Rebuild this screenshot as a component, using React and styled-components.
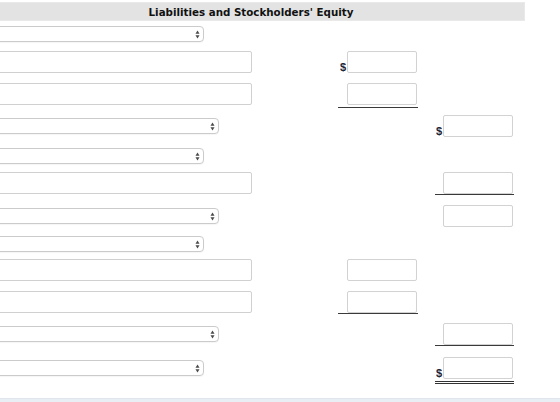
import React from 'react'
import styled, { createGlobalStyle } from 'styled-components'

const GlobalStyle = createGlobalStyle`
  body {
    margin: 0;
    background: #fff;
    overflow: hidden;
    font-family: "DejaVu Sans", Verdana, sans-serif;
  }
`

const Sheet = styled.div`
  margin-left: -23px;
  width: 583px;
  height: 402px;
  display: flex;
  flex-direction: column;
`

const Heading = styled.div`
  margin-top: 2px;
  width: 548px;
  height: 19px;
  box-sizing: border-box;
  background: #e3e3e3;
  border: 1px solid #e9e9e9;
  display: flex;
  align-items: center;
  justify-content: center;
  font-size: 10.3px;
  font-weight: bold;
  color: #111;
`

// label | subtotal column | spacer | total column
const Row = styled.div`
  display: grid;
  grid-template-columns: 361px 80px 17px 79px;
  grid-template-rows: 22px;
  align-items: start;
  margin-top: ${p => p.$top}px;
`

const SelectBox = styled.div`
  grid-column: 1;
  align-self: center;
  width: ${p => (p.$wide ? 242 : 227)}px;
  height: 16px;
  box-sizing: border-box;
  border: 1px solid #cbcbcb;
  border-radius: 4px;
  background: #fff;
  box-shadow: 0 1px 1px rgba(0, 0, 0, 0.04);
  display: flex;
  align-items: center;
  justify-content: flex-end;
  padding-right: 3px;
`

const TextBox = styled.div`
  grid-column: 1;
  width: 275px;
  height: 22px;
  box-sizing: border-box;
  border: 1px solid #d0d0d0;
  border-radius: 2px;
  background: #fff;
`

const Amount = styled.div`
  grid-column: ${p => (p.$total ? 4 : 2)};
  display: flex;
  align-items: flex-end;
  justify-content: flex-end;
  padding-right: 1px;
  padding-bottom: ${p => p.$pad || 0}px;
  border-bottom: ${p =>
    p.$line === 'double' ? '3px double #333' : p.$line ? '1px solid #3a3a3a' : 'none'};
`

const Field = styled.div`
  width: 70px;
  height: 22px;
  box-sizing: border-box;
  border: 1px solid #d2d2d2;
  border-radius: 2px;
  background: #fff;
`

const Dollar = styled.span`
  font-family: "Liberation Sans", Arial, sans-serif;
  font-size: 11px;
  font-weight: bold;
  line-height: 11px;
  color: #1f2636;
  margin-right: 1px;
`

const Footer = styled.div`
  margin-top: auto;
  height: 3px;
  background: #e9eef5;
  border-top: 1px solid #e0e6ee;
`

function Arrows() {
  return (
    <svg width="5" height="9" viewBox="0 0 5 9">
      <polygon points="0.5,3.8 2.5,0.6 4.5,3.8" fill="#4a4a4a" />
      <polygon points="0.5,5.2 2.5,8.4 4.5,5.2" fill="#4a4a4a" />
    </svg>
  )
}

const Select = ({ wide }) => (
  <SelectBox $wide={wide}>
    <Arrows />
  </SelectBox>
)

const Money = ({ total, dollar, line, pad }) => (
  <Amount $total={total} $line={line} $pad={pad}>
    {dollar && <Dollar>$</Dollar>}
    <Field />
  </Amount>
)

export default function App() {
  return (
    <>
      <GlobalStyle />
      <Sheet>
        <Heading>Liabilities and Stockholders' Equity</Heading>

        <Row $top={2}>
          <Select />
        </Row>
        <Row $top={6}>
          <TextBox />
          <Money dollar />
        </Row>
        <Row $top={10}>
          <TextBox />
          <Money line="single" pad={2} />
        </Row>
        <Row $top={10}>
          <Select wide />
          <Money total dollar />
        </Row>
        <Row $top={8}>
          <Select />
        </Row>
        <Row $top={5}>
          <TextBox />
          <Money total line="single" />
        </Row>
        <Row $top={11}>
          <Select wide />
          <Money total />
        </Row>
        <Row $top={6}>
          <Select />
        </Row>
        <Row $top={4}>
          <TextBox />
          <Money />
        </Row>
        <Row $top={10}>
          <TextBox />
          <Money line="single" />
        </Row>
        <Row $top={10}>
          <Select wide />
          <Money total line="single" />
        </Row>
        <Row $top={12}>
          <Select />
          <Money total dollar line="double" pad={2} />
        </Row>

        <Footer />
      </Sheet>
    </>
  )
}
